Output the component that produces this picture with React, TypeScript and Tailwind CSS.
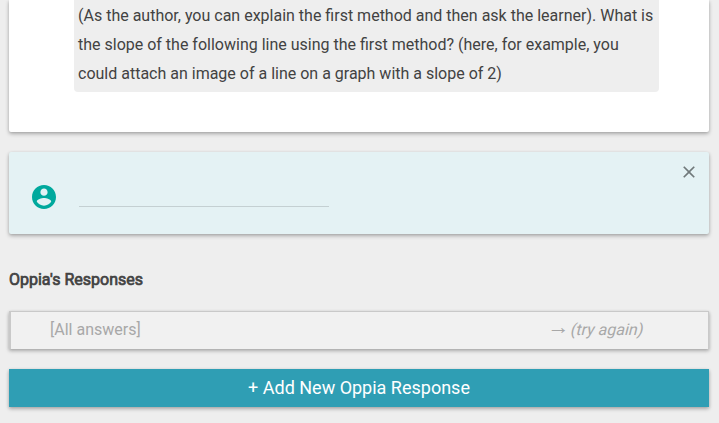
export default function App() {
  return (
    <main className="h-[423px] w-[719px] overflow-hidden bg-[#eeeeee] pl-[9px] pr-[10px] font-['Roboto',sans-serif] text-[16px] text-[#424242]">
      <section className="h-[132px] rounded-b-[2px] bg-white pl-[65px] shadow-[0_1px_3px_rgba(0,0,0,0.15),0_2px_4px_rgba(0,0,0,0.22)]">
        <div className="h-[92px] w-[585px] rounded-b-[4px] bg-[#eeeeee] px-1 pt-[1px] leading-[29px]">
          <p className="whitespace-nowrap">(As the author, you can explain the first method and then ask the learner). What is<br />the slope of the following line using the first method? (here, for example, you<br />could attach an image of a line on a graph with a slope of 2)</p>
        </div>
      </section>
      <section className="mt-5 flex h-[82px] rounded-[2px] bg-[#e4f2f4] pl-[23px] pt-[33px] shadow-[0_1px_3px_rgba(0,0,0,0.15),0_2px_4px_rgba(0,0,0,0.22)]">
        <svg className="size-6 shrink-0" viewBox="2 2 20 20" fill="#00a99d"><path d="M12 2C6.48 2 2 6.48 2 12s4.48 10 10 10 10-4.48 10-10S17.52 2 12 2zm0 3c1.66 0 3 1.34 3 3s-1.34 3-3 3-3-1.34-3-3 1.34-3 3-3zm0 14.2c-2.5 0-4.71-1.28-6-3.22.03-1.99 4-3.08 6-3.08 1.99 0 5.97 1.09 6 3.08-1.29 1.94-3.5 3.22-6 3.22z" /></svg>
        <div className="ml-[23px] h-[22px] w-[250px] border-b border-[#c4d0d2]" />
        <button aria-label="Close" className="-mt-[23px] ml-auto mr-[10px] size-5">
          <svg className="size-5" viewBox="0 0 24 24" fill="#70797a"><path d="M19 6.41L17.59 5 12 10.59 6.41 5 5 6.41 10.59 12 5 17.59 6.41 19 12 13.41 17.59 19 19 17.59 13.41 12z" /></svg>
        </button>
      </section>
      <h2 className="mt-[34px] h-6 font-normal leading-6 [-webkit-text-stroke:0.7px_#424242]">Oppia's Responses</h2>
      <div className="mt-[19px] flex h-[38px] items-center justify-between border border-b-0 border-l-2 border-[#c9c9c9] bg-[#f1f1f1] pb-[2px] pl-[39px] pr-[65px] text-[#a8a8a8] shadow-[0_1px_3px_rgba(0,0,0,0.15),0_2px_4px_rgba(0,0,0,0.22)]"><span>[All answers]</span><span className="flex h-6 items-center gap-1 leading-6"><span className="flex w-4 justify-center pb-[6px] font-['Liberation_Serif',serif] text-[22px] leading-6">→</span><span className="inline-block -skew-x-[14deg]">(try again)</span></span></div>
      <button className="mt-5 block h-[38px] w-full bg-[#2f9eb4] pb-[2px] text-[18px] text-white shadow-[0_1px_3px_rgba(0,0,0,0.15),0_2px_4px_rgba(0,0,0,0.22)]">+ Add New Oppia Response</button>
    </main>
  );
}
